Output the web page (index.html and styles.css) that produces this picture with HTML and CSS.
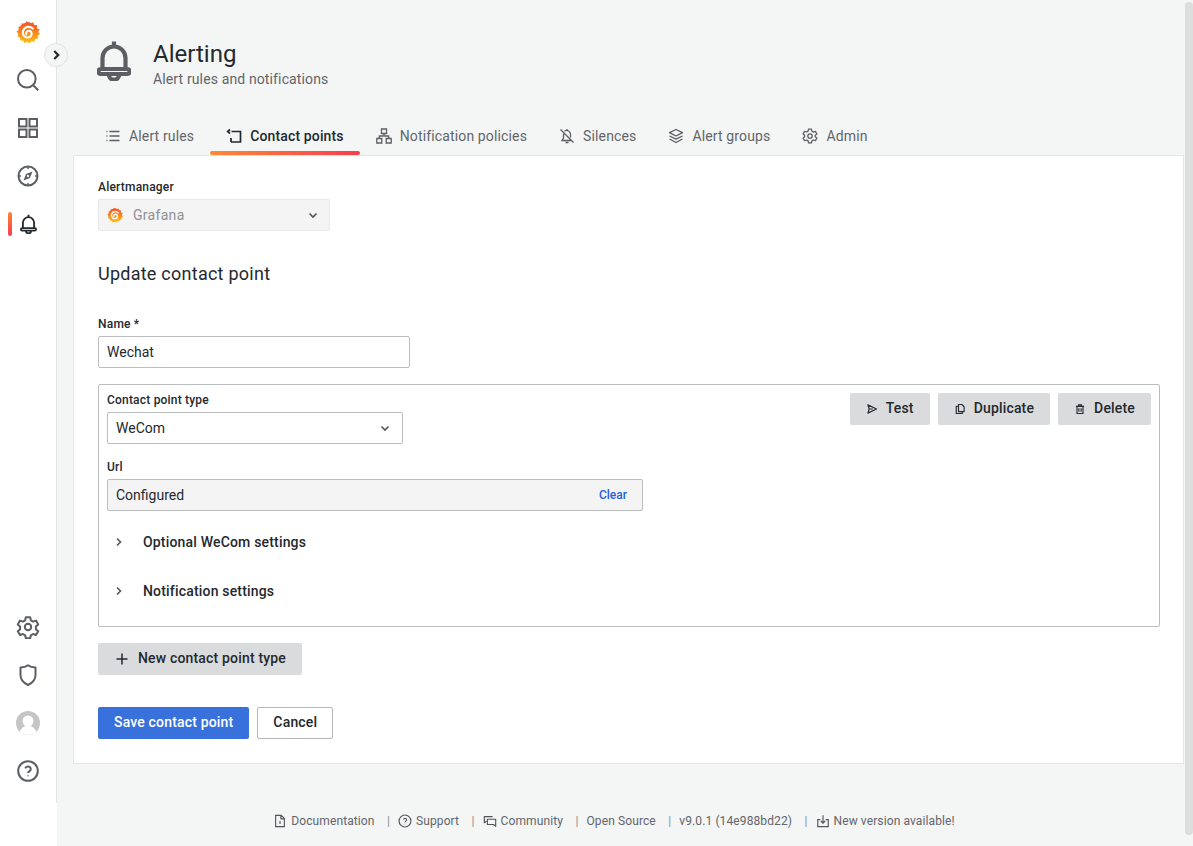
FILE: index.html
```html
<!DOCTYPE html>
<html lang="en">
<head>
<meta charset="utf-8">
<title>Alerting</title>
<link rel="stylesheet" href="styles.css">
</head>
<body>
<svg class="defs" width="0" height="0" aria-hidden="true">
  <defs>
    <linearGradient id="gf" gradientUnits="userSpaceOnUse" x1="12" y1="24" x2="12" y2="0">
      <stop offset="0" stop-color="#fbc70f"/>
      <stop offset="0.35" stop-color="#f99a1c"/>
      <stop offset="0.7" stop-color="#f26b26"/>
      <stop offset="1" stop-color="#ef4f2b"/>
    </linearGradient>
    <symbol id="logo" viewBox="0 0 24 24">
      <circle cx="12" cy="12.300" r="9.900" fill="url(#gf)"/>
      <path fill="url(#gf)" d="M12.600 .8l1.700 2.800 3-1.400.8 3.100 3.100-.2-.4 3.100 2.900 1-1.500 2.700 2 2.200-2.600 1.500.5 3-3 .4-.7 2.900-2.900-.8-1.900 2.400-2.400-1.800-2.600 1.500-1.200-2.800-3 .2-.1-3-2.900-1.100 1.200-2.700-2.100-2.200 2.500-1.700-.7-2.900 3-.7.500-3 3 .6 1.600-2.600 2.300 1.800z"/>
      <path fill="none" stroke="#fff" stroke-width="2.100" stroke-linecap="round" d="M10.300 14a2.500 2.500 0 0 1 2.300-3.200 2.900 2.900 0 0 1 3 2.900 3.800 3.800 0 0 1-3.800 3.800 5 5 0 0 1-5-5.100 5.700 5.700 0 0 1 5.700-5.500 6 6 0 0 1 4.200 1.700"/>
    </symbol>
    <symbol id="bell" viewBox="0 0 34 41">
      <path d="M5.500 28V18a11.500 11.500 0 0 1 23 0v10M3.800 29h26.400c1.600 0 2.300 1 2.300 2.500S31.800 34 30.200 34H3.800c-1.600 0-2.300-1-2.300-2.500S2.200 29 3.800 29zM11.800 34.500a5.200 5.200 0 0 0 10.400 0M17 1.500v5"/>
    </symbol>
  </defs>
</svg>

<div class="app">
  <nav class="sidebar">
    <a class="nav-item nav-logo"><svg class="logo-lg"><use href="#logo"/></svg></a>
    <a class="nav-item"><svg class="ico" viewBox="0 0 24 24"><circle cx="10.800" cy="10.800" r="8.800"/><path d="M17.200 17.200l5 5"/></svg></a>
    <a class="nav-item"><svg class="ico" viewBox="0 0 24 24"><path d="M3 3h7.500v7.500H3zM13.500 3H21v7.500h-7.500zM3 13.500h7.500V21H3zM13.500 13.500H21V21h-7.500z"/></svg></a>
    <a class="nav-item"><svg class="ico" viewBox="0 0 24 24"><circle cx="12" cy="12" r="9.500"/><path class="thin" d="M12 2.500v2.500M12 19v2.500M2.500 12H5M19 12h2.500"/><path class="fill-i" d="M16.500 7.500l-2.600 6.400-6.400 2.600 2.600-6.400zM12 10.800a1.200 1.200 0 1 0 .01 0z"/></svg></a>
    <a class="nav-item nav-active"><svg class="bell-sm"><use href="#bell"/></svg></a>
    <div class="nav-spacer"></div>
    <a class="nav-item"><svg class="ico" viewBox="0 0 24 24"><path d="M9.800 2.300h4.400l.6 3 2.300 1.300 2.900-1 2.200 3.800-2.300 2v2.800l2.300 2-2.200 3.800-2.900-1-2.300 1.300-.6 3H9.800l-.6-3-2.300-1.300-2.900 1-2.200-3.800 2.300-2v-2.800l-2.300-2 2.200-3.800 2.900 1 2.300-1.300z" stroke-linejoin="round"/><circle cx="12" cy="12" r="3.200"/></svg></a>
    <a class="nav-item"><svg class="ico" viewBox="0 0 24 24"><path d="M12 2.200c2 1.500 4.700 2.100 7.500 2.200v7.600c0 4.600-3 8-7.500 10-4.500-2-7.500-5.400-7.500-10V4.400c2.800-.1 5.500-.7 7.500-2.200z" stroke-linejoin="round"/></svg></a>
    <a class="nav-item"><span class="avatar"><svg viewBox="0 0 24 24"><circle cx="12" cy="12" r="12" class="av-bg"/><circle cx="12" cy="10" r="5.500" class="av-fg"/><path class="av-fg" d="M3.800 20.500c1.500-4 4.500-5.800 8.200-5.800s6.700 1.800 8.200 5.800c-2 2.200-5 3.500-8.200 3.500s-6.200-1.300-8.200-3.500z"/></svg></span></a>
    <a class="nav-item"><svg class="ico" viewBox="0 0 24 24"><circle cx="12" cy="12" r="9.800"/><path d="M9.200 9.300a2.900 2.900 0 0 1 5.600.9c0 1.900-2.800 2.300-2.800 3.800"/><path d="M12 16.600v.6"/></svg></a>
  </nav>
  <button class="expand" type="button"><svg viewBox="0 0 16 16"><path d="M6 3.500l4.500 4.500L6 12.500"/></svg></button>

  <main class="main">
    <header class="page-head">
      <svg class="head-ico"><use href="#bell"/></svg>
      <div class="head-text">
        <h1>Alerting</h1>
        <p>Alert rules and notifications</p>
      </div>
    </header>

    <div class="tabs">
      <a class="tab"><svg class="tab-ico" viewBox="0 0 16 16"><path d="M4.500 3.500h10M4.500 8h10M4.500 12.500h10M1.500 3.500h1M1.500 8h1M1.500 12.500h1"/></svg>Alert rules</a>
      <a class="tab tab-active"><svg class="tab-ico" viewBox="0 0 16 16"><path d="M5.500 3.500H14.500V14H5M2 3.500h1.500M4 1.500L1.700 3.500 4 5.500M5 14v-4"/></svg>Contact points</a>
      <a class="tab"><svg class="tab-ico" viewBox="0 0 16 16"><path d="M5.500 1h5v4.500h-5zM.8 10.500h5V15h-5zM10.200 10.500h5V15h-5zM8 5.500v2.500M3.300 10.500V8h9.400v2.500"/></svg>Notification policies</a>
      <a class="tab"><svg class="tab-ico" viewBox="0 0 16 16"><path d="M1.500 1.500l13 13M4.500 5.800V10L3 12.500h9M5.500 3.200A3.800 3.800 0 0 1 11.500 6.500v3M6.500 14.500h3M8 1v1"/></svg>Silences</a>
      <a class="tab"><svg class="tab-ico" viewBox="0 0 16 16"><path d="M8 1.500l6.500 3.200L8 8 1.500 4.700zM1.500 8L8 11.200 14.500 8M1.500 11L8 14.500 14.500 11" stroke-linejoin="round"/></svg>Alert groups</a>
      <a class="tab"><svg class="tab-ico" viewBox="0 0 16 16"><path d="M6.500 1.200h3l.4 2 1.500.9 2-.7 1.500 2.600-1.600 1.300v1.500l1.600 1.300-1.500 2.600-2-.7-1.500.9-.4 2h-3l-.4-2-1.500-.9-2 .7-1.500-2.600L2.700 8.800V7.200L1.100 5.900l1.500-2.600 2 .7 1.500-.9z" stroke-linejoin="round"/><circle cx="8" cy="8" r="2.200"/></svg>Admin</a>
    </div>

    <section class="card">
      <label class="lbl">Alertmanager</label>
      <div class="select select-disabled">
        <svg class="logo-sm"><use href="#logo"/></svg>
        <span>Grafana</span>
        <svg class="chev" viewBox="0 0 16 16"><path d="M4.500 6.500L8 10l3.500-3.500"/></svg>
      </div>

      <h2>Update contact point</h2>

      <label class="lbl lbl-name">Name *</label>
      <div class="input input-name">Wechat</div>

      <div class="channel">
        <div class="channel-top">
          <div>
            <label class="lbl">Contact point type</label>
            <div class="select select-type">
              <span>WeCom</span>
              <svg class="chev" viewBox="0 0 16 16"><path d="M4.500 6.500L8 10l3.500-3.500"/></svg>
            </div>
          </div>
          <div class="channel-actions">
            <button class="btn btn-sec" type="button"><svg class="btn-ico" viewBox="0 0 16 16"><path d="M2.500 2.500L14 8 2.500 13.500 4.200 8zM4.200 8H9" stroke-linejoin="round"/></svg>Test</button>
            <button class="btn btn-sec" type="button"><svg class="btn-ico" viewBox="0 0 16 16"><path d="M5 4.500H3v9.500h8v-2M6 2h4.500L13.500 5v6.500H6z" stroke-linejoin="round"/></svg>Duplicate</button>
            <button class="btn btn-sec" type="button"><svg class="btn-ico" viewBox="0 0 16 16"><path d="M2.500 4.500h11M6 4.500V2.500h4v2M4 4.500V14h8V4.500M6.500 7v4.500M9.500 7v4.500"/></svg>Delete</button>
          </div>
        </div>
        <label class="lbl lbl-url">Url</label>
        <div class="input input-url"><span>Configured</span><a class="clear">Clear</a></div>
        <div class="collapse collapse-1"><svg class="chev-r" viewBox="0 0 16 16"><path d="M6 4.500L9.500 8 6 11.500"/></svg>Optional WeCom settings</div>
        <div class="collapse collapse-2"><svg class="chev-r" viewBox="0 0 16 16"><path d="M6 4.500L9.500 8 6 11.500"/></svg>Notification settings</div>
      </div>

      <button class="btn btn-sec btn-new" type="button"><svg class="plus" viewBox="0 0 16 16"><path d="M8 2.500v11M2.500 8h11"/></svg>New contact point type</button>
      <div class="form-actions">
        <button class="btn btn-primary" type="button">Save contact point</button>
        <button class="btn btn-outline" type="button">Cancel</button>
      </div>
    </section>

    <footer class="foot">
      <a><svg class="foot-ico" viewBox="0 0 16 16"><path d="M3 1.500h6.500L13 5v9.500H3zM9 1.500V5.500h4M8 8v3.500" stroke-linejoin="round"/></svg>Documentation</a><i>|</i>
      <a><svg class="foot-ico" viewBox="0 0 16 16"><circle cx="8" cy="8" r="6.800"/><path d="M6.200 6.300a1.900 1.900 0 0 1 3.700.5c0 1.200-1.900 1.400-1.900 2.700M8 11v.6"/></svg>Support</a><i>|</i>
      <a><svg class="foot-ico" viewBox="0 0 16 16"><path d="M11 3H1.500v7l2-1.500H4M5 6h9.500v8l-2.500-2H5z" stroke-linejoin="round"/></svg>Community</a><i>|</i>
      <a>Open Source</a><i>|</i>
      <a>v9.0.1 (14e988bd22)</a><i>|</i>
      <a><svg class="foot-ico" viewBox="0 0 16 16"><path d="M5 6.500H2v8h12v-8h-3M8 1.500V10M5.500 8L8 10.500 10.500 8"/></svg>New version available!</a>
    </footer>
  </main>
  <div class="scroll-thumb"></div>
</div>
</body>
</html>
```

FILE: styles.css
```css
* { box-sizing: border-box; }
html, body { margin: 0; padding: 0; height: 100%; overflow: hidden; }
body { font-family: Roboto, "Liberation Sans", sans-serif; font-size: 14px; color: #24292e; background: #fff; }
.defs { position: absolute; }
.app { display: flex; height: 846px; position: relative; }
.scroll-thumb { position: absolute; left: 1185px; top: 2px; width: 8px; height: 833px; border-radius: 4px; background: #dcdddd; }

.sidebar { width: 57px; height: 803px; flex: none; display: flex; flex-direction: column; align-items: center; background: #fff; border-right: 1px solid #e4e5e6; padding-top: 8px; padding-bottom: 8px; }
.nav-item { width: 56px; height: 48px; flex: none; display: flex; align-items: center; justify-content: center; position: relative; }
.nav-spacer { flex: 1; }
.logo-lg { width: 24px; height: 24px; }
.logo-sm { width: 16px; height: 16px; margin-right: 10px; flex: none; }
.ico { width: 24px; height: 24px; fill: none; stroke: #5b5f64; stroke-width: 2; }
.ico .thin { stroke-width: 1.5; }
.ico .fill-i { fill: #5b5f64; stroke: none; fill-rule: evenodd; }
.bell-sm { width: 17px; height: 20px; fill: none; stroke: #24292e; stroke-width: 3.800; }
.nav-active::before { content: ""; position: absolute; left: 8px; top: 12px; width: 4px; height: 24px; border-radius: 2px; background: linear-gradient(0deg, #f83c50, #ff8833); }
.avatar { width: 24px; height: 24px; display: block; }
.avatar svg { display: block; width: 24px; height: 24px; }
.av-bg { fill: #c4c5c7; }
.av-fg { fill: #fff; }
.expand { position: absolute; left: 44px; top: 43px; width: 24px; height: 24px; padding: 4px; border-radius: 50%; background: #f4f5f5; border: 1px solid #e0e1e2; display: block; }
.expand svg { display: block; width: 14px; height: 14px; fill: none; stroke: #24292e; stroke-width: 2.600; }

.main { flex: 1; min-width: 0; background: #f4f5f5; padding: 0 9px 0 16px; }
.page-head { display: flex; align-items: flex-start; height: 115px; padding: 40px 0 0 24px; }
.head-ico { width: 34px; height: 41px; flex: none; fill: none; stroke: #5b5f64; stroke-width: 4.200; margin-right: 22px; }
h1 { margin: 0; font-size: 24px; font-weight: 400; line-height: 28px; }
.head-text p { margin: 2px 0 0; font-size: 14px; line-height: 18px; color: #62656a; letter-spacing: .13px; }

.tabs { display: flex; height: 41px; padding-left: 16px; border-bottom: 1px solid #e4e5e6; }
.tab { height: 40px; padding: 1px 16px 0; display: flex; align-items: center; color: #62656a; white-space: nowrap; letter-spacing: .14px; position: relative; }
.tab-ico { width: 16px; height: 16px; margin-right: 8px; fill: none; stroke: #5b5f64; stroke-width: 1.300; flex: none; }
.tab-active { color: #24292e; font-weight: 500; }
.tab-active .tab-ico { stroke: #24292e; stroke-width: 1.700; }
.tab-active::after { content: ""; position: absolute; left: 0; right: 0; bottom: 0; height: 4px; border-radius: 2px; background: linear-gradient(90deg, #ff8833, #f83c50); }

.card { background: #fff; border: 1px solid #e4e5e6; border-top: 0; height: 608px; padding: 24px 24px 0 24px; }
.lbl { display: block; font-size: 12px; line-height: 15px; font-weight: 500; color: #24292e; margin-bottom: 4px; letter-spacing: .2px; }
.select, .input { display: flex; align-items: center; height: 32px; padding: 0 8px; border: 1px solid #bcbdbf; border-radius: 2px; background: #fff; }
.select-disabled { width: 232px; background: #f4f4f5; border-color: #e8e9ea; color: #8e9095; letter-spacing: .3px; }
.select-disabled .chev { margin-right: 0; }
.select-type { width: 296px; }
.select span { flex: 1; }
.chev { width: 16px; height: 16px; fill: none; stroke: #52555a; stroke-width: 1.600; flex: none; margin-right: 1px; }
h2 { margin: 31px 0 0; font-size: 18px; font-weight: 400; line-height: 24px; letter-spacing: .25px; }
.lbl-name { margin-top: 31px; }
.input-name { width: 312px; }
.channel { margin-top: 16px; width: 1062px; height: 243px; border: 1px solid #bcbdbf; border-radius: 2px; padding: 8px 8px; }
.channel-top { display: flex; justify-content: space-between; align-items: flex-start; }
.channel-actions { display: flex; gap: 8px; }
.btn { height: 32px; display: inline-flex; align-items: center; border: 0; border-radius: 2px; font-family: inherit; font-size: 14px; font-weight: 500; padding: 0 16px 2px; white-space: nowrap; color: #24292e; letter-spacing: .17px; }
.btn-sec { background: #dadbdd; }
.btn-ico { width: 12px; height: 12px; margin: 2px 8px 0 0; fill: none; stroke: #24292e; stroke-width: 1.500; flex: none; }
.lbl-url { margin-top: 16px; }
.input-url { width: 536px; background: #f4f4f5; justify-content: space-between; padding-right: 15px; }
.clear { font-size: 12px; font-weight: 500; color: #1f62e0; }
.collapse { display: flex; align-items: center; font-weight: 500; height: 24px; letter-spacing: .18px; }
.collapse-1 { margin-top: 19px; }
.collapse-2 { margin-top: 25px; }
.chev-r { width: 16px; height: 16px; margin: 0 16px 0 4px; fill: none; stroke: #52555a; stroke-width: 1.600; flex: none; }
.btn-new { margin-top: 16px; }
.plus { width: 16px; height: 16px; margin: 2px 8px 0 0; fill: none; stroke: #24292e; stroke-width: 1.500; flex: none; }
.form-actions { display: flex; gap: 8px; margin-top: 32px; }
.btn-primary { background: #3871dc; color: #fff; }
.btn-outline { background: #fff; border: 1px solid #b5b6b8; padding: 0 15px 2px; }

.foot { display: flex; justify-content: center; align-items: center; height: 18px; margin-top: 48px; padding-right: 29px; font-size: 12px; color: #62656a; white-space: nowrap; letter-spacing: .11px; }
.foot a { display: flex; align-items: center; }
.foot i { font-style: normal; margin: 0 8px 0 12.400px; color: #8e9095; }
.foot-ico { width: 14px; height: 14px; margin-right: 4px; fill: none; stroke: #52555a; stroke-width: 1.300; flex: none; }
```
